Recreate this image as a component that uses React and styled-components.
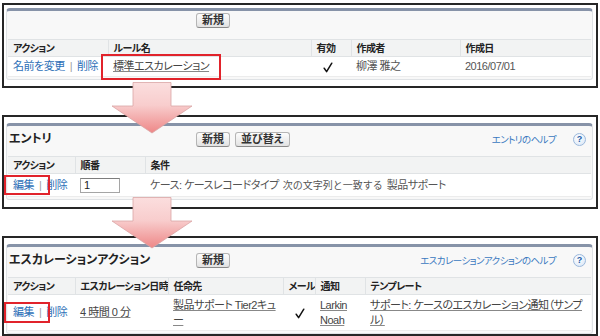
import React from 'react';
import styled, { createGlobalStyle } from 'styled-components';

const GlobalStyle = createGlobalStyle`
  html, body { margin: 0; padding: 0; background: #fff; }
  body {
    font-family: "Liberation Sans", "Noto Sans CJK JP", sans-serif;
    font-size: 11px;
    line-height: 15px;
    color: #555;
    font-feature-settings: "palt";
  }
`;

const Page = styled.div`
  position: relative;
  width: 600px;
  height: 336px;
  box-sizing: border-box;
  padding: 3px 2px 0;
  display: flex;
  flex-direction: column;
  gap: 27px;
  overflow: hidden;
`;

const Frame = styled.section`
  border: 2px solid #262626;
  padding: ${p => p.$pad};
`;

const Panel = styled.div`
  background: #f8f8f8;
  border: 1px solid #dfe2e5;
  border-top: 3px solid #8793a8;
  border-radius: 4px 4px 3px 3px;
  padding: 0 1px 2px;
`;

const PanelHead = styled.div`
  display: grid;
  grid-template-columns: 187px auto 1fr;
  align-items: start;
  box-sizing: border-box;
  height: ${p => p.$h}px;
  padding: ${p => p.$pt}px 5px 0 1px;
`;

const Title = styled.h2`
  margin: 0;
  font-size: 12px;
  line-height: 15px;
  font-weight: bold;
  color: #222;
`;

const Buttons = styled.div`
  display: flex;
  gap: 5px;
`;

const Btn = styled.button`
  font: bold 11px/13px "Liberation Sans", "Noto Sans CJK JP", sans-serif;
  font-feature-settings: "palt";
  color: #333;
  height: 15px;
  padding: 0 5px;
  border: 1px solid #b5b5b5;
  border-bottom-color: #8a8a8a;
  border-radius: 3px;
  background: linear-gradient(#fdfdfd, #e2e2e2);
`;

const Help = styled.a`
  justify-self: end;
  display: flex;
  align-items: center;
  gap: 17px;
  color: #3a78c0;
  text-decoration: none;
  font-size: 9.5px;
  letter-spacing: -0.6px;
  line-height: 15px;
`;

const HelpIcon = styled.span`
  width: 13px;
  height: 13px;
  box-sizing: border-box;
  border-radius: 50%;
  border: 1px solid #9bb8dc;
  background: radial-gradient(circle at 40% 35%, #fff, #d6e4f5);
  color: #1f5da8;
  font: bold 9px/11px "Liberation Sans", sans-serif;
  letter-spacing: 0;
  text-align: center;
`;

const Tbl = styled.table`
  width: 100%;
  border-collapse: collapse;
  table-layout: fixed;
`;

const Col = styled.col`
  width: ${p => p.$w}px;
`;

const Th = styled.th`
  height: 16px;
  padding: 0 2px 0 5px;
  background: #f2f3f3;
  border-top: 1px solid #e0e3e5;
  border-bottom: 1px solid #e0e3e5;
  border-left: 1px solid #e0e3e5;
  text-align: left;
  font-weight: bold;
  font-size: 10px;
  letter-spacing: -0.6px;
  color: #222;
  white-space: nowrap;
  overflow: hidden;
  &:first-child { border-left: none; }
`;

const Td = styled.td`
  height: ${p => p.$h || 19}px;
  padding: 0 2px 0 5px;
  background: #fff;
  border-bottom: 1px solid #ececec;
  vertical-align: middle;
  white-space: nowrap;
  letter-spacing: -0.5px;
`;

const Action = styled.a`
  color: #2d6fb7;
  text-decoration: none;
`;

const Pipe = styled.span`
  color: #a0a0a0;
  margin: 0 5px;
`;

const U = styled.a`
  color: #444;
  text-decoration: underline;
  text-decoration-color: #888;
`;

const Small = styled.span`
  font-size: 10px;
  font-feature-settings: normal;
  letter-spacing: 0;
  margin: 0 4px;
`;

const Num = styled.input`
  width: 40px;
  height: 15px;
  box-sizing: border-box;
  border: 1px solid #a5a5a5;
  border-top-color: #7d7d7d;
  padding: 0 3px;
  font: 11px "Liberation Sans", sans-serif;
  color: #222;
  vertical-align: middle;
`;

const Marked = styled.span`
  position: relative;
  &::after {
    content: '';
    position: absolute;
    left: ${p => p.$l}px;
    right: ${p => p.$r}px;
    top: ${p => p.$t}px;
    bottom: ${p => p.$b}px;
    border: 2.5px solid #e1232b;
    z-index: 2;
  }
`;

const CheckSvg = styled.svg`
  margin-left: 7px;
  vertical-align: middle;
`;

const Check = () => (
  <CheckSvg width="10" height="11" viewBox="0 0 10 11">
    <path d="M1.2 6.2 L3.6 9.6 L8.8 1.2" fill="none" stroke="#111" strokeWidth="1.5" strokeLinecap="round" strokeLinejoin="round" />
  </CheckSvg>
);

const ArrowSvg = styled.svg`
  position: absolute;
  left: 111px;
  top: ${p => p.$top}px;
  z-index: 3;
`;

const Arrow = ({ top, id }) => (
  <ArrowSvg $top={top} width="82" height="52" viewBox="0 0 82 52">
    <defs>
      <linearGradient id={id} x1="0" y1="0" x2="0" y2="1">
        <stop offset="0" stopColor="#fbdede" />
        <stop offset="0.45" stopColor="#f8cdcd" />
        <stop offset="1" stopColor="#ee8787" />
      </linearGradient>
    </defs>
    <path d="M22 0.5 H60 V24 H81 L41 51 L1 24 H22 Z" fill={`url(#${id})`} stroke="#d9a5a5" strokeWidth="0.8" />
  </ArrowSvg>
);

const App = () => (
  <>
    <GlobalStyle />
    <Page>
      <Frame $pad="3px 3px 6px 2px">
        <Panel>
          <PanelHead $h={28} $pt={2}>
            <span />
            <Buttons><Btn>新規</Btn></Buttons>
          </PanelHead>
          <Tbl>
            <colgroup>
              <Col $w={100} /><Col $w={203} /><Col $w={40} /><Col $w={109} /><col />
            </colgroup>
            <thead>
              <tr><Th>アクション</Th><Th>ルール名</Th><Th>有効</Th><Th>作成者</Th><Th>作成日</Th></tr>
            </thead>
            <tbody>
              <tr>
                <Td><Action>名前を変更</Action><Pipe>|</Pipe><Action>削除</Action></Td>
                <Td><Marked $l={-12} $r={-12} $t={-6} $b={-8}><U>標準エスカレーション</U></Marked></Td>
                <Td><Check /></Td>
                <Td>柳澤 雅之</Td>
                <Td>2016/07/01</Td>
              </tr>
            </tbody>
          </Tbl>
        </Panel>
      </Frame>

      <Frame $pad="6px 3px 7px 2px">
        <Panel>
          <PanelHead $h={30} $pt={6}>
            <Title>エントリ</Title>
            <Buttons><Btn>新規</Btn><Btn>並び替え</Btn></Buttons>
            <Help>エントリのヘルプ<HelpIcon>?</HelpIcon></Help>
          </PanelHead>
          <Tbl>
            <colgroup>
              <Col $w={67} /><Col $w={70} /><col />
            </colgroup>
            <thead>
              <tr><Th>アクション</Th><Th>順番</Th><Th>条件</Th></tr>
            </thead>
            <tbody>
              <tr>
                <Td $h={22}><Marked $l={-9} $r={-16} $t={-4} $b={-4}><Action>編集</Action></Marked><Pipe>|</Pipe><Action>削除</Action></Td>
                <Td><Num readOnly value="1" /></Td>
                <Td>ケース: ケースレコードタイプ<Small>次の文字列と一致する</Small>製品サポート</Td>
              </tr>
            </tbody>
          </Tbl>
        </Panel>
      </Frame>

      <Frame $pad="6px 3px 0 2px">
        <Panel>
          <PanelHead $h={30} $pt={6}>
            <Title>エスカレーションアクション</Title>
            <Buttons><Btn>新規</Btn></Buttons>
            <Help>エスカレーションアクションのヘルプ<HelpIcon>?</HelpIcon></Help>
          </PanelHead>
          <Tbl>
            <colgroup>
              <Col $w={67} /><Col $w={93} /><Col $w={115} /><Col $w={32} /><Col $w={50} /><col />
            </colgroup>
            <thead>
              <tr><Th>アクション</Th><Th>エスカレーション日時</Th><Th>任命先</Th><Th>メール</Th><Th>通知</Th><Th>テンプレート</Th></tr>
            </thead>
            <tbody>
              <tr>
                <Td $h={35}><Marked $l={-9} $r={-16} $t={-4} $b={-5}><Action>編集</Action></Marked><Pipe>|</Pipe><Action>削除</Action></Td>
                <Td><U>4 時間 0 分</U></Td>
                <Td><U>製品サポート Tier2キュ<br />ー</U></Td>
                <Td><Check /></Td>
                <Td><U>Larkin<br />Noah</U></Td>
                <Td><U>サポート: ケースのエスカレーション通知（サンプ<br />ル）</U></Td>
              </tr>
            </tbody>
          </Tbl>
        </Panel>
      </Frame>

      <Arrow top={82} id="ar1" />
      <Arrow top={197} id="ar2" />
    </Page>
  </>
);

export default App;
